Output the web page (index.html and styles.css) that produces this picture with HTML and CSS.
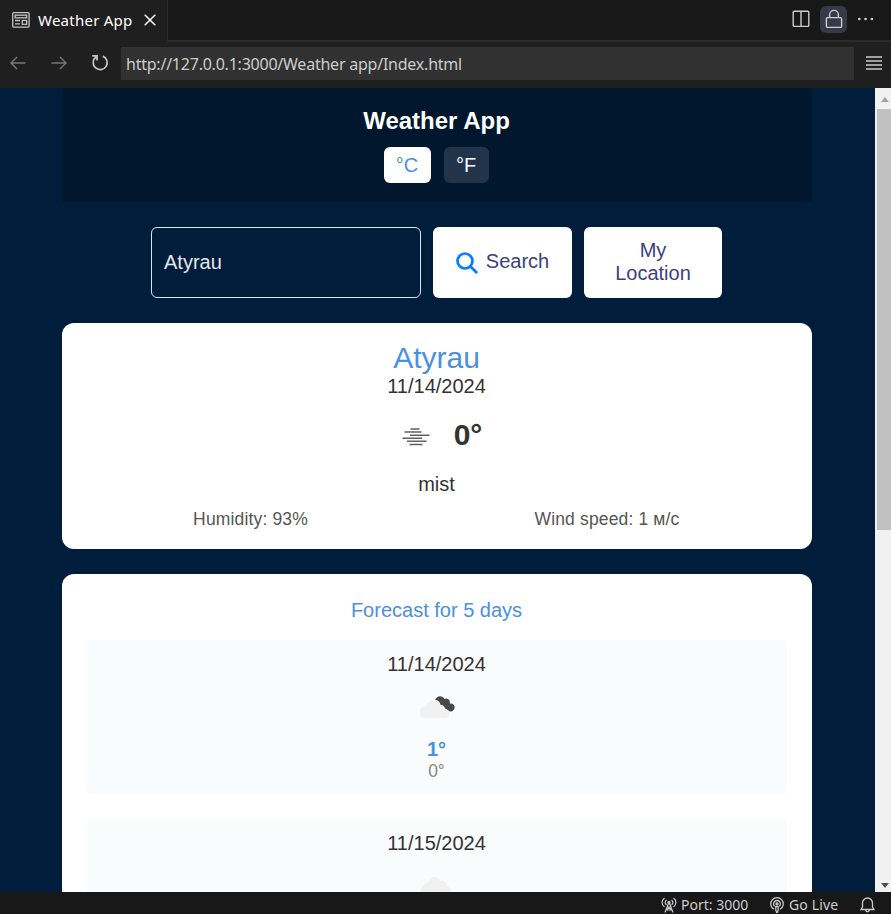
FILE: index.html
```html
<!DOCTYPE html>
<html lang="en">
<head>
<meta charset="utf-8">
<title>Weather App</title>
<link rel="stylesheet" href="styles.css">
</head>
<body>
<div class="window">
  <div class="tabs">
    <div class="tab">
      <svg width="18" height="16" viewBox="0 0 18 16" fill="none" stroke="#c5c5c5" stroke-width="1.3"><rect x=".7" y=".7" width="16.4" height="14.4" rx="1"/><rect x="3.2" y="3.2" width="11.5" height="2.6"/><path d="M3 8.5h5M3 11.8h5"/><rect x="10.3" y="8.5" width="4.4" height="3.8"/></svg>
      <span class="tab-name">Weather App</span>
      <svg class="close" width="12" height="12" viewBox="0 0 12 12" fill="none" stroke="#fff" stroke-width="1.5"><path d="M.7.7l10.6 10.6M11.3.7L.7 11.3"/></svg>
    </div>
    <div class="tab-actions">
      <svg width="18" height="18" viewBox="0 0 18 18" fill="none" stroke="#ccc" stroke-width="1.4"><rect x="1.2" y="1.2" width="15.6" height="15.2" rx="1"/><path d="M9 1v15.5"/></svg>
      <span class="lock"><svg width="18" height="20" viewBox="0 0 18 20" fill="none" stroke="#ccc" stroke-width="1.4"><rect x="1.4" y="8.6" width="15.2" height="9.8" rx="1.2"/><path d="M4.600 8.500V5.800a4.400 4.400 0 0 1 8.800 0v2.700"/></svg></span>
      <svg width="18" height="4" viewBox="0 0 18 4" fill="#ccc"><circle cx="2.300" cy="2" r="1.350"/><circle cx="8.600" cy="2" r="1.350"/><circle cx="14.900" cy="2" r="1.350"/></svg>
    </div>
  </div>
  <div class="toolbar">
    <svg class="back" width="16" height="14" viewBox="0 0 16 14" fill="none" stroke="#777" stroke-width="1.4"><path d="M15.500 7H1M7 1L1 7l6 6"/></svg>
    <svg class="forward" width="16" height="14" viewBox="0 0 16 14" fill="none" stroke="#777" stroke-width="1.4"><path d="M.5 7H15M9 1l6 6-6 6"/></svg>
    <svg class="reload" width="18" height="18" viewBox="0 0 18 18" fill="none" stroke="#c5c5c5" stroke-width="1.700"><path d="M11.800 2.100A7 7 0 1 1 5 3M1.200 1.800h4.900v4.700"/></svg>
    <div class="address"><span>http://127.0.0.1:3000/Weather app/Index.html</span></div>
    <svg class="menu" width="16" height="14" viewBox="0 0 16 14" stroke="#ccc" stroke-width="1.4"><path d="M0 1h16M0 5h16M0 9h16M0 13h16"/></svg>
  </div>
  <div class="viewport">
    <main class="page">
      <header class="header">
        <h1>Weather App</h1>
        <div class="units"><button class="unit active">°C</button><button class="unit">°F</button></div>
      </header>
      <div class="search">
        <div class="field">Atyrau</div>
        <button class="action"><svg width="22" height="22" viewBox="0 0 22 22" fill="none" stroke="#0a7cff" stroke-width="2.700"><circle cx="9" cy="9" r="7.500"/><path d="M14.300 14.300l6.800 6.800"/></svg><span>Search</span></button>
        <button class="action">My<br>Location</button>
      </div>
      <section class="current">
        <h2>Atyrau</h2>
        <div class="date">11/14/2024</div>
        <div class="reading">
          <svg width="28" height="18" viewBox="0 0 28 18" stroke="#606060" stroke-width="1.500"><path d="M8.500 1h9M2.500 4h17M8 7.300h19.500M.5 10.300h19.500M5 13.300h19.500M7.500 16.400h13"/></svg>
          <strong>0°</strong>
        </div>
        <div class="condition">mist</div>
        <div class="details"><span>Humidity: 93%</span><span>Wind speed: 1 м/с</span></div>
      </section>
      <section class="forecast">
        <h3>Forecast for 5 days</h3>
        <article class="day">
          <div class="date">11/14/2024</div>
          <svg class="cloud" width="36" height="24" viewBox="0 0 36 24"><path fill="#484848" d="M15 5.500C16 1 22-.500 24.500 4a3.800 3.800 0 0 1 5.200 4.700A3.900 3.900 0 1 1 28.300 15.500L20 10z"/><path fill="#f1f1f1" d="M6 23a5.800 5.800 0 1 1 .4-11.500A8 8 0 0 1 18 5.700a6 6 0 0 1 2.500 4 4.500 4.500 0 0 1 4.500 4.500 4.600 4.600 0 0 1 1.500 8.800z"/></svg>
          <div class="high">1°</div>
          <div class="low">0°</div>
        </article>
        <article class="day next">
          <div class="date">11/15/2024</div>
          <svg class="cloud" width="36" height="24" viewBox="0 0 36 24"><path fill="#f1f1f1" d="M6 23a5.800 5.800 0 0 1-3-10.500 5.500 5.500 0 0 1 5.500-4A6.200 6.200 0 0 1 20.500 7a4.700 4.700 0 0 1 6 5 5.700 5.700 0 0 1 1 11z"/></svg>
        </article>
      </section>
    </main>
    <div class="scrollbar"><i class="up"></i><div class="thumb"></div><i class="down"></i></div>
  </div>
  <footer class="status">
    <svg width="16" height="16" viewBox="0 0 16 16" fill="none" stroke="#c8c8c8" stroke-width="1.200"><path d="M3.500 1C.3 3.500.3 7.500 3.500 10M12.500 1c3.200 2.500 3.200 6.500 0 9M5.500 2.800c-1.500 1.500-1.500 3.700 0 5.200M10.500 2.800c1.500 1.500 1.500 3.700 0 5.200M8 5L4 15.500M8 5l4 10.500M6.500 9.500l4 3M9.500 9.500l-4 3M5 13h6"/><circle cx="8" cy="5.400" r="1"/></svg>
    <span class="port">Port: 3000</span>
    <svg class="live-icon" width="14" height="16" viewBox="0 0 14 16" fill="none" stroke="#c8c8c8" stroke-width="1.300"><path d="M4 12.300a6.200 6.200 0 1 1 6 0M4.600 9.300a3.400 3.400 0 1 1 4.800 0"/><circle cx="7" cy="6.800" r="1" fill="#c8c8c8"/><path d="M5.800 9.500h2.400v3.500L7.500 15.300h-1L5.800 13z"/></svg>
    <span class="live">Go Live</span>
    <svg class="bell" width="15" height="16" viewBox="0 0 15 16" fill="none" stroke="#c8c8c8" stroke-width="1.300"><path d="M1 12.500h13l-1.500-2.500V6a5 5 0 0 0-10 0v4zM5.700 13a1.800 1.800 0 0 0 3.600 0"/></svg>
  </footer>
</div>
</body>
</html>
```
FILE: styles.css
```css
* { box-sizing: border-box; }
body { margin: 0; overflow: hidden; font-family: "Liberation Sans", Arial, sans-serif; }
svg { display: block; flex: none; }
h1, h2, h3 { margin: 0; font-weight: 400; }
button { border: 0; margin: 0; font-family: inherit; }

.window { width: 891px; height: 914px; display: flex; flex-direction: column; background: #1f1f1f; }
.tabs, .toolbar, .status { font-family: "Noto Sans", "Open Sans", sans-serif; white-space: nowrap; }
.tabs { height: 42px; flex: none; display: flex; }
.tab { width: 167px; display: flex; align-items: center; padding: 0 0 2px 12px; }
.tab-name { width: 94px; margin: 0 12px 0 8px; color: #fff; font-size: 15px; letter-spacing: .25px; }
.tab-actions { flex: 1; display: flex; align-items: center; justify-content: flex-end; padding: 0 16px 2px 0; background: #181818; border-left: 1px solid #2b2b2b; border-bottom: 2px solid #2b2b2b; }
.tab-actions > svg:first-child { margin-right: 1px; }
.lock { width: 27px; height: 27px; margin: 0 10px 0 9px; border-radius: 6px; background: #383848; display: grid; place-items: center; }
.toolbar { height: 46px; flex: none; display: flex; align-items: center; padding: 0 9px 3px 10px; }
.back, .forward, .reload, .menu { margin-top: -2px; }
.forward { margin-left: 25px; }
.reload { margin-left: 24px; }
.address { width: 733px; height: 33px; margin: 0 12px 0 12px; padding-left: 5px; background: #313131; color: #ccc; font-size: 16px; line-height: 34px; letter-spacing: -.23px; }

.viewport { flex: 1; min-height: 0; display: flex; background: #001e3c; }
.page { width: 875px; padding: 0 63px 0 62px; overflow: hidden; }
.header { height: 114px; padding: 19px 1px 0 0; background: #00172e; text-align: center; }
h1 { color: #fff; font-size: 24px; line-height: 28px; font-weight: 700; }
.units { display: flex; justify-content: center; gap: 13px; margin: 12px 1px 0 0; }
.unit { width: 45px; height: 36px; padding: 0; border-radius: 6px; background: #22344a; color: #fff; font-size: 20px; }
.unit.active { width: 47px; background: #fff; color: #4a90e2; }
.search { display: flex; gap: 12px; height: 71px; margin: 25px 0 25px 89px; }
.field { width: 270px; border: 1px solid #dde3e8; border-radius: 6px; padding-left: 12px; color: #e4e6e8; font-size: 20px; line-height: 69px; }
.action { width: 139px; padding: 0 0 2px; display: flex; align-items: center; justify-content: center; gap: 8px; border-radius: 6px; background: #fff; color: #3c4080; font-size: 20px; line-height: 23px; }
.action:last-child { width: 138px; }
.action svg { margin-top: 3px; }
.current { height: 226px; padding-top: 18px; border-radius: 12px; background: #fff; color: #333; text-align: center; }
h2 { padding-right: 1px; color: #4a90e2; font-size: 30px; line-height: 34px; }
.date { padding-right: 1px; font-size: 20px; line-height: 23px; }
.reading { display: flex; justify-content: center; align-items: center; height: 34px; margin: 20px 0 21px 10px; gap: 24px; font-size: 30px; }
.reading svg { margin-top: 3px; }
.condition { padding-right: 1px; font-size: 20px; line-height: 23px; }
.details { display: flex; margin-top: 13px; color: #555; font-size: 17.5px; line-height: 20px; letter-spacing: .15px; }
.details span { width: 375px; }
.details span:first-child { padding-left: 2px; }
.details span:last-child { padding-right: 35px; }
.forecast { margin-top: 25px; padding: 25px; border-radius: 12px 12px 0 0; background: #fff; text-align: center; }
h3 { padding-right: 1px; color: #4a90e2; font-size: 20px; line-height: 23px; margin-bottom: 18px; }
.day { height: 154px; margin-bottom: 26px; padding-top: 13px; border-radius: 4px; background: #fafbfd; color: #333; }
.day.next { padding-top: 12px; }
.cloud { margin: 19px auto 18px 333px; }
.high { padding-right: 1px; color: #4a90e2; font-size: 20px; line-height: 24px; font-weight: 700; }
.low { padding-right: 1px; color: #888; font-size: 17.5px; line-height: 20px; }

.scrollbar { width: 16px; display: flex; flex-direction: column; align-items: center; background: #f1f1f1; }
.up, .down { width: 0; height: 0; border: 4.5px solid transparent; }
.up { border-top: 0; border-bottom: 5px solid #a3a3a3; margin: 9px 0 7px 3px; }
.down { border-bottom: 0; border-top: 5px solid #505050; margin: auto 0 4px 3px; }
.thumb { width: 14px; height: 421px; margin-left: 2px; background: #c1c1c1; }
.status { height: 22px; flex: none; display: flex; align-items: center; padding: 4px 0 0 661px; background: #181818; color: #ccc; font-size: 14px; line-height: 18px; }
.port { width: 67px; margin: 0 22px 0 4px; }
.live { width: 50px; margin: 0 21px 0 5px; letter-spacing: .15px; }
```
